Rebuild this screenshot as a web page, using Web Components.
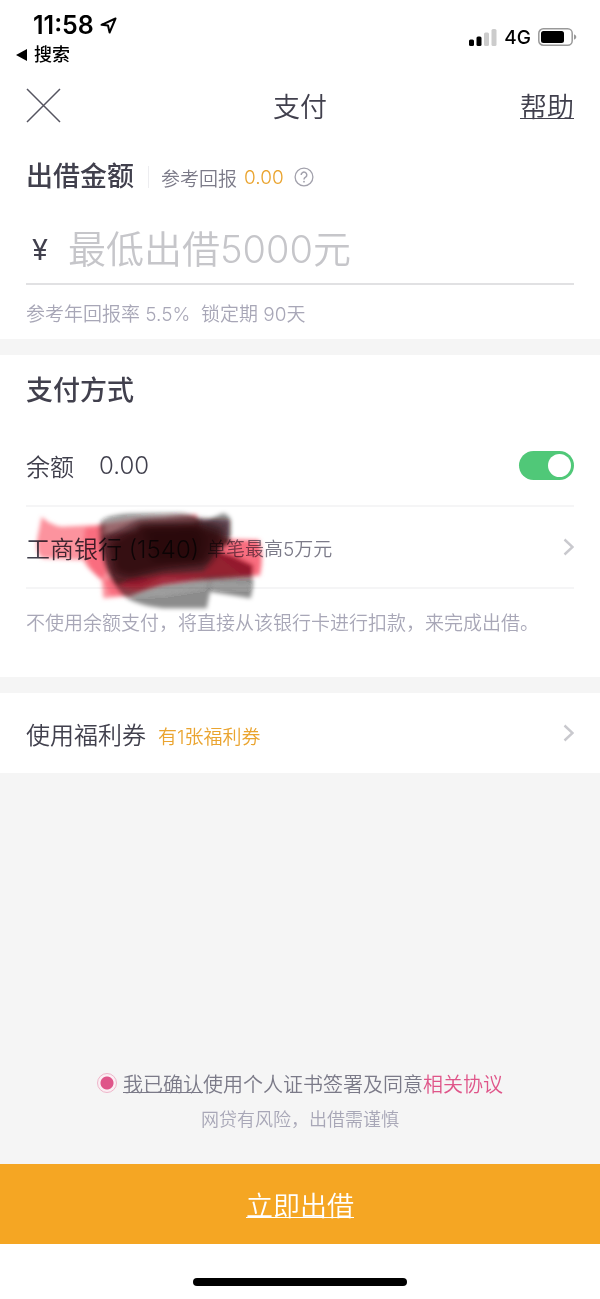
<!DOCTYPE html>
<html lang="zh-CN">
<head>
<meta charset="utf-8">
<meta name="viewport" content="width=device-width, initial-scale=1">
<title>支付</title>
<style>
  body {
    margin: 0;
    background: #f5f5f5;
    color: #41404d;
    font-family: Inter, "Noto Sans CJK SC", sans-serif;
    font-weight: 350;
    --ink: #41404d;
    --muted: #a8a7b7;
    --mid: #7b7a88;
    --orange: #eaa42f;
    --pink: #df5589;
    --line: #f5f5f6;
    --edge: 26px;
    --small: 19px;
  }
</style>
</head>
<body>
<pay-page></pay-page>
<script>
const define = (name, markup) => {
  const template = document.createElement('template');
  template.innerHTML = markup;
  customElements.define(name, class extends HTMLElement {
    constructor() {
      super();
      this.attachShadow({ mode: 'open' }).append(template.content.cloneNode(true));
    }
  });
};

define('status-bar', `
<style>
  :host { display: flex; justify-content: space-between; height: 66px; padding: 0 23px 0 16px; box-sizing: border-box; color: #000; }
  .left { padding-top: 11px; }
  .time { display: flex; align-items: center; gap: 6px; height: 28px; padding-left: 17px; font-size: 25px; font-weight: 600; }
  .back { display: flex; align-items: center; gap: 7px; height: 32px; font: inherit; font-size: 18px; font-weight: 500; line-height: 32px; color: #000; padding: 0; border: 0; background: none; }
  .right { display: flex; align-items: center; gap: 7px; height: 74px; font-size: 19px; font-weight: 500; }
  svg { display: block; }
</style>
<div class="left">
  <div class="time"><span>11:58</span>
    <svg width="17" height="17" viewBox="0 0 17 17" fill="none" stroke="#000" stroke-width="2" stroke-linejoin="round"><path d="M15.5 1.5 1.5 7.8 8 8.6 9.6 15.5Z"/></svg>
  </div>
  <button class="back"><svg width="11" height="12" viewBox="0 0 11 12"><path d="M0 6 11 0V12Z"/></svg>搜索</button>
</div>
<div class="right">
  <svg width="28" height="17" viewBox="0 0 28 17"><rect y="10.5" width="5" height="6.5" rx="1.5"/><rect x="7.5" y="7.5" width="5" height="9.5" rx="1.5"/><g fill="#ccc"><rect x="15" y="3.5" width="5" height="13.5" rx="1.5"/><rect x="22.5" width="5" height="17" rx="1.5"/></g></svg>
  <span>4G</span>
  <svg width="39" height="18" viewBox="0 0 39 18"><rect x=".8" y=".8" width="33.4" height="16.4" rx="4.5" fill="none" stroke="#999" stroke-width="1.5"/><rect x="3" y="3" width="23" height="12" rx="2.5"/><path d="M36 6.2q2.4 1 2.4 2.8T36 11.8Z" fill="#999"/></svg>
</div>`);

define('nav-header', `
<style>
  :host { display: grid; grid-template-columns: 1fr auto 1fr; align-items: center; height: 78px; padding: 0 var(--edge); }
  button { justify-self: start; padding: 0; border: 0; background: none; }
  svg { display: block; }
  h1 { margin: 0; font-size: 27px; font-weight: inherit; }
  a { justify-self: end; color: inherit; font-size: 27px; text-underline-offset: 1px; text-decoration-thickness: 1px; text-decoration-skip-ink: none; }
</style>
<button aria-label="关闭"><svg width="35" height="35" viewBox="0 0 35 35" fill="none" stroke="#555460" stroke-width="1.5"><path d="M1 1 34 34M34 1 1 34"/></svg></button>
<h1><slot></slot></h1>
<a href="#help">帮助</a>`);

define('section-title', `
<style>
  :host { display: block; }
  h2 { margin: 0; font-size: 27px; font-weight: 500; line-height: 40px; }
</style>
<h2><slot></slot></h2>`);

define('pay-note', `
<style>
  :host { display: flex; align-items: center; font-size: var(--small); color: var(--muted); white-space: nowrap; }
</style>
<span><slot></slot></span>`);

define('amount-panel', `
<style>
  :host { display: block; padding: 13px var(--edge) 0; background: #fff; }
  .head { display: flex; align-items: center; font-size: var(--small); color: var(--mid); }
  section-title { color: var(--ink); }
  .rule { width: 1px; height: 22px; margin: 0 12px 0 14px; background: #ededf0; }
  .value { margin-left: 7px; color: var(--orange); }
  .help { margin-left: 10px; padding: 0; border: 0; background: none; }
  svg { display: block; }
  .entry { display: flex; align-items: center; height: 70px; margin-top: 18px; border-bottom: 2px solid #e1e1e3; box-sizing: border-box; }
  label { width: 42px; padding-left: 6px; box-sizing: border-box; font-size: 29px; font-weight: 400; }
  input { flex: 1; min-width: 0; height: 60px; padding: 0; border: 0; outline: 0; background: none; font: inherit; font-size: 38px; color: var(--ink); }
  input::placeholder { color: #c6c6ca; opacity: 1; }
  pay-note { height: 54px; }
</style>
<div class="head">
  <section-title>出借金额</section-title><span class="rule"></span>
  <span>参考回报</span><span class="value">0.00</span>
  <button class="help" aria-label="说明"><svg width="20" height="20" viewBox="0 0 20 20" fill="none" stroke="#a2a1ac" stroke-width="1.3"><circle cx="10" cy="10" r="8.9"/><path d="M7.2 8a2.8 2.8 0 1 1 4.4 2.2Q10 11.2 10 12.5" stroke-width="1.5"/><circle cx="10" cy="14.7" r=".9" fill="#a2a1ac" stroke="none"/></svg></button>
</div>
<div class="entry"><label for="amount">¥</label><input id="amount" inputmode="decimal" placeholder="最低出借5000元"></div>
<pay-note>参考年回报率 5.5%&nbsp; 锁定期 90天</pay-note>`);

define('toggle-switch', `
<style>
  :host { display: block; }
  input { appearance: none; display: flex; align-items: center; justify-content: flex-end; width: 55px; height: 29px; margin: 0; padding: 3px; box-sizing: border-box; border-radius: 15px; background: #50c878; }
  input::before { content: ""; width: 23px; height: 23px; border-radius: 50%; background: #fff; }
  input:not(:checked) { justify-content: flex-start; background: #ddd; }
</style>
<input type="checkbox" role="switch" aria-label="使用余额" checked>`);

define('chevron-icon', `
<style>
  :host { display: block; margin-left: auto; }
  svg { display: block; }
</style>
<svg width="11" height="18" viewBox="0 0 11 18" fill="none" stroke="#c9c9ce" stroke-width="2.4"><path d="M1.5 1.5 9.5 9 1.5 16.5"/></svg>`);

define('ink-scribble', `
<style>
  :host { display: block; pointer-events: none; mix-blend-mode: multiply; }
  svg { display: block; }
</style>
<svg width="245" height="110" viewBox="0 0 735 330" aria-hidden="true">
  <defs>
    <filter id="soft" x="-10%" y="-10%" width="120%" height="120%"><feGaussianBlur stdDeviation="6"/></filter>
    <filter id="haze" x="-20%" y="-20%" width="140%" height="140%"><feGaussianBlur stdDeviation="13"/></filter>
  </defs>
  <g filter="url(#soft)">
    <path fill="#fb7886" fill-opacity=".8" d="M35 35Q60 60 95 65L200 60 300 45 500 28 512 70 600 102 688 105Q704 150 690 212L640 215 400 235 300 272 220 280 215 225Q165 185 160 165L40 160Q15 150 22 100Z"/>
    <path fill="#f7415b" fill-opacity=".45" d="M165 70 215 62 230 200 215 225Q165 185 160 120ZM560 105 685 105Q700 150 688 208L640 212 560 150ZM222 225 330 215 400 235 300 272 240 270Z"/>
    <path fill="#000" fill-opacity=".45" d="M208 60Q210 32 300 26L450 24Q500 28 520 50L580 25Q600 30 602 50V115L560 135 665 182Q675 230 662 280L540 260 530 310H400Q310 300 275 268 205 190 208 60Z"/>
    <path fill="#3a050e" fill-opacity=".5" d="M214 95 325 45 500 40 600 45 597 115 558 135 667 182 665 213 530 222 400 215 330 240 255 240Q220 180 214 95Z"/>
    <path fill="#b51830" fill-opacity=".6" d="M560 140 610 150 672 180 666 212 540 215 400 240 320 255 260 245 300 222 400 205 520 200Z"/>
    <path fill="#fff" fill-opacity=".14" d="M225 45 400 36 500 42 495 56 330 62 320 80 230 82ZM290 275 400 245 530 235 528 250 400 270ZM545 235 660 240 655 252 550 250Z"/>
  </g>
  <g filter="url(#haze)" fill="#1c0307">
    <path fill-opacity=".65" d="M235 110 335 55 530 52 585 70 575 120 530 180 400 195 300 220 250 205Z"/>
    <path fill-opacity=".35" d="M340 70 500 60 530 100 510 175 370 170Z"/>
  </g>
</svg>`);

define('method-panel', `
<style>
  :host { display: block; margin-top: 16px; padding: 0 var(--edge) 24px; background: #fff; }
  section-title { padding: 16px 0 14px; }
  .row { position: relative; display: flex; align-items: center; height: 82px; box-sizing: border-box; border-bottom: 2px solid var(--line); font-size: 24px; white-space: nowrap; }
  .balance { margin-left: 25px; }
  toggle-switch { margin-left: auto; }
  .limit { margin-left: 8px; font-size: var(--small); color: var(--mid); }
  ink-scribble { position: absolute; left: 4px; top: -2px; }
  pay-note { height: 64px; }
</style>
<section-title>支付方式</section-title>
<div class="row"><span>余额</span><span class="balance">0.00</span><toggle-switch></toggle-switch></div>
<div class="row"><span>工商银行 (1540)</span><span class="limit">单笔最高5万元</span><chevron-icon></chevron-icon><ink-scribble></ink-scribble></div>
<pay-note>不使用余额支付，将直接从该银行卡进行扣款，来完成出借。</pay-note>`);

define('coupon-row', `
<style>
  :host { display: flex; align-items: center; height: 80px; margin-top: 16px; padding: 0 var(--edge); background: #fff; font-size: 24px; }
  .main { display: flex; align-items: baseline; gap: 12px; }
  .tip { font-size: var(--small); color: var(--orange); }
</style>
<div class="main"><span>使用福利券</span><span class="tip">有1张福利券</span></div><chevron-icon></chevron-icon>`);

define('agree-block', `
<style>
  :host { display: block; margin-top: auto; padding-bottom: 27px; text-align: center; }
  .agree { display: flex; align-items: center; justify-content: center; height: 40px; font-size: 20px; color: var(--mid); white-space: nowrap; }
  input { appearance: none; width: 20px; height: 20px; margin: 0 6px 0 0; border: 1px solid #efb6ca; border-radius: 50%; background: radial-gradient(circle, var(--pink) 6px, #fbeef3 7px); }
  u { text-underline-offset: 0px; text-decoration-thickness: 1px; text-decoration-skip-ink: none; }
  a { color: var(--pink); text-decoration: none; }
  p { margin: 0; font-size: 18px; line-height: 34px; color: var(--muted); }
</style>
<div class="agree"><input type="radio" id="ok" checked><label for="ok"><u>我已确认</u>使用个人证书签署及同意</label><a href="#terms">相关协议</a></div>
<p>网贷有风险，出借需谨慎</p>`);

define('submit-bar', `
<style>
  :host { display: block; background: #fff; }
  button { display: block; width: 100%; height: 80px; padding: 0; border: 0; background: #f5a623; color: #fff; font: inherit; font-size: 27px; text-decoration: underline 1px; text-underline-offset: 1px; text-decoration-skip-ink: none; }
  .home { display: flex; justify-content: center; padding: 34px 0 13px; }
  .home span { width: 214px; height: 8px; border-radius: 4px; background: #000; }
</style>
<button><slot></slot></button>
<div class="home"><span></span></div>`);

define('pay-page', `
<style>
  :host { display: flex; flex-direction: column; min-height: 100vh; }
  .top { background: #fff; }
</style>
<div class="top"><status-bar></status-bar><nav-header>支付</nav-header></div>
<amount-panel></amount-panel>
<method-panel></method-panel>
<coupon-row></coupon-row>
<agree-block></agree-block>
<submit-bar>立即出借</submit-bar>`);
</script>
</body>
</html>
